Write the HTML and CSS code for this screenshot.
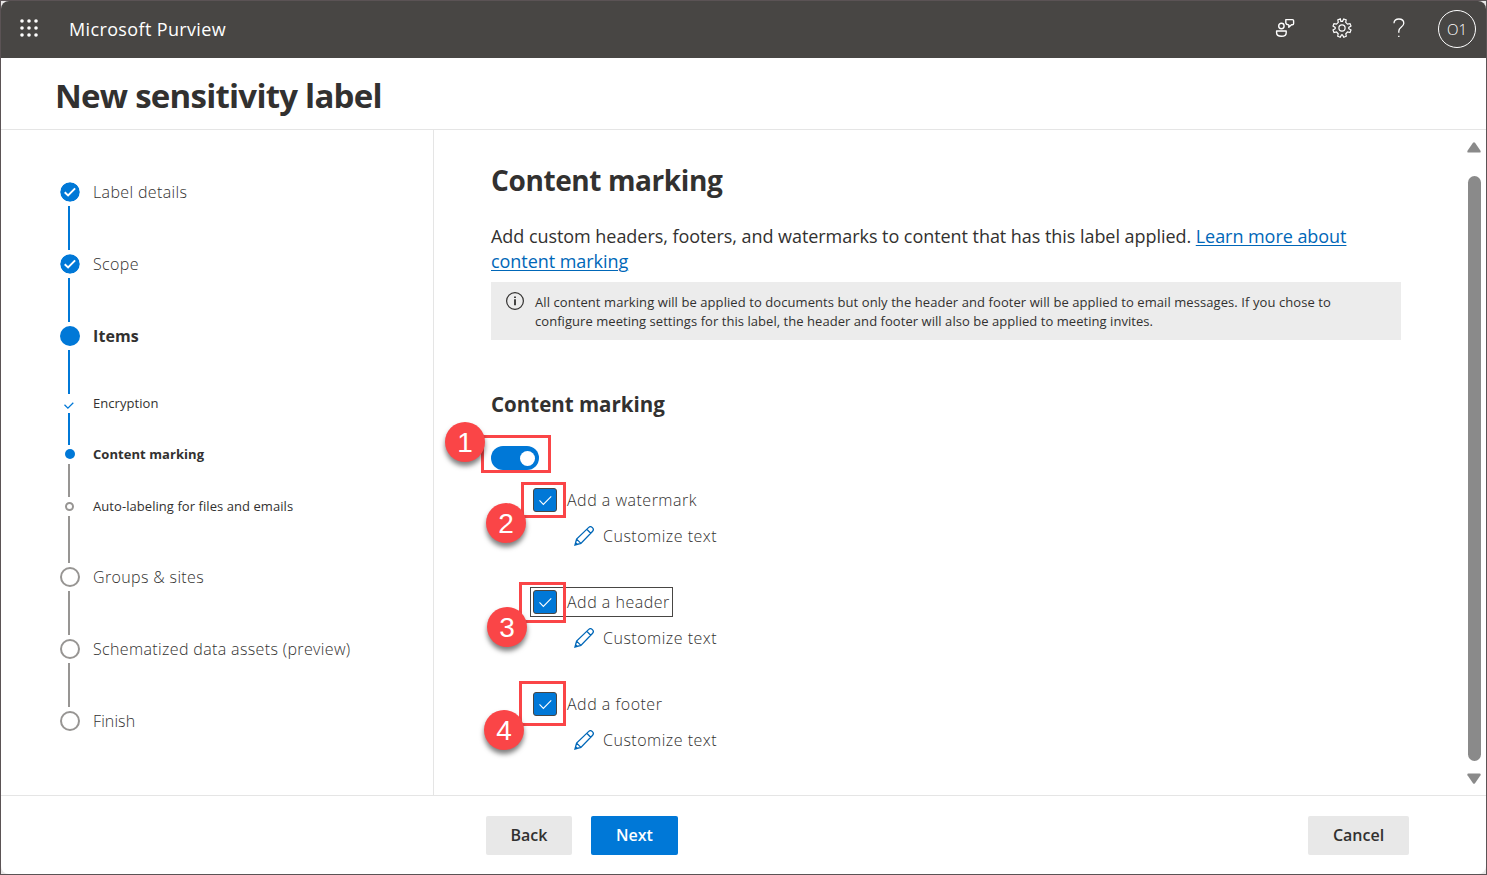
FILE: index.html
```html
<!DOCTYPE html>
<html lang="en">
<head>
<meta charset="utf-8">
<title>New sensitivity label - Microsoft Purview</title>
<link rel="stylesheet" href="styles.css">
</head>
<body>
<svg class="defs" width="0" height="0" aria-hidden="true">
  <symbol id="pencil" viewBox="0 0 20 20">
    <path d="M1 19l1.600-5.900L14.500 1.600a2.400 2.400 0 0 1 3.900 3.900L6.900 17.400zM2.600 13.100l4.300 4.300M12.800 3.300l3.900 3.900M1 19l.6-2.300 1.700 1.700z" fill="none" stroke="currentColor" stroke-width="1.300"/>
  </symbol>
  <symbol id="tick" viewBox="0 0 24 24">
    <path d="M6 12.500l4.200 4.300L18.800 8" fill="none" stroke="currentColor" stroke-width="1.200"/>
  </symbol>
  <symbol id="done" viewBox="0 0 20 20">
    <circle cx="10" cy="10" r="9.800" fill="#0078d7"/>
    <path d="M4.700 10.200l3.400 3.200 7-7" fill="none" stroke="#fff" stroke-width="2"/>
  </symbol>
</svg>
<div class="window">
  <header class="topbar">
    <svg class="waffle" width="20" height="20" viewBox="0 0 20 20" fill="#fff">
      <circle cx="3" cy="3" r="1.800"/><circle cx="10" cy="3" r="1.800"/><circle cx="17" cy="3" r="1.800"/>
      <circle cx="3" cy="10" r="1.800"/><circle cx="10" cy="10" r="1.800"/><circle cx="17" cy="10" r="1.800"/>
      <circle cx="3" cy="17" r="1.800"/><circle cx="10" cy="17" r="1.800"/><circle cx="17" cy="17" r="1.800"/>
    </svg>
    <span class="product">Microsoft Purview</span>
    <svg class="feedback" width="20" height="20" viewBox="0 0 20 20" fill="none" stroke="#fff" stroke-width="1.400">
      <circle cx="6.400" cy="8" r="2.700"/>
      <path d="M1.600 13h9.600v1.700c0 2.200-1.800 3.600-4.800 3.600s-4.800-1.400-4.800-3.600z" stroke-linejoin="round"/>
      <path d="M10.800 1.600h6.600q1.200 0 1.200 1.200v2.800q0 1.200-1.200 1.200h-.9l-2.700 2.500V6.900q-2.600-.2-3-1.800z" stroke-linejoin="round"/>
    </svg>
    <svg class="gear" width="20" height="20" viewBox="0 0 20 20" fill="none" stroke="#fff" stroke-width="1.200">
      <circle cx="10" cy="10" r="3.100"/>
      <path d="M8.900 3.300L8.300.9l-2.500 1 .5 2.400-1.800 1.800-2.500-.5-1 2.500 2.200 1.300v1.300L1 12l1 2.500 2.500-.5 1.700 1.800-.5 2.400 2.500 1L9.500 16.900h1l1.300 2.300 2.500-1-.5-2.400 1.700-1.800 2.500.5 1-2.500-2.200-1.300V9.400L19 8.100l-1-2.500-2.500.5-1.800-1.800.5-2.400-2.500-1-1.200 2.400z"/>
    </svg>
    <svg class="help" width="12" height="20" viewBox="0 0 12 20" fill="none" stroke="#fff" stroke-width="1.300">
      <path d="M1 5.300C1 2.500 3 1 5.800 1s5 1.600 5 4.200c0 3.800-5 4-5 8v1.500"/><path d="M5.100 18.300h1.400"/>
    </svg>
    <span class="avatar">O1</span>
  </header>

  <div class="titlebar"><h1 class="title">New sensitivity label</h1></div>

  <div class="body">
    <nav class="steps">
      <div class="step"><div class="rail"><svg class="dot"><use href="#done"/></svg><i class="line"></i></div><span class="name">Label details</span></div>
      <div class="step"><div class="rail"><svg class="dot"><use href="#done"/></svg><i class="line"></i></div><span class="name">Scope</span></div>
      <div class="step"><div class="rail"><i class="dot current"></i><i class="line"></i></div><span class="name strong">Items</span></div>
      <div class="step sub first"><div class="rail"><svg class="mini-tick" width="10" height="7" viewBox="0 0 10 7"><path d="M.5 2.800l3.400 3.300L9.300.8" fill="none" stroke="#0078d7" stroke-width="1.300"/></svg><i class="line"></i></div><span class="name">Encryption</span></div>
      <div class="step sub second"><div class="rail"><i class="mini current"></i><i class="line idle"></i></div><span class="name strong">Content marking</span></div>
      <div class="step sub third"><div class="rail"><i class="mini todo"></i><i class="line idle"></i></div><span class="name">Auto-labeling for files and emails</span></div>
      <div class="step"><div class="rail"><i class="dot todo"></i><i class="line idle"></i></div><span class="name">Groups &amp; sites</span></div>
      <div class="step"><div class="rail"><i class="dot todo"></i><i class="line idle"></i></div><span class="name">Schematized data assets (preview)</span></div>
      <div class="step"><div class="rail"><i class="dot todo"></i></div><span class="name finish">Finish</span></div>
    </nav>

    <main class="content">
      <h2 class="heading">Content marking</h2>
      <p class="intro">Add custom headers, footers, and watermarks to content that has this label applied. <a class="link" href="#">Learn more about<br>content marking</a></p>
      <div class="notice">
        <svg class="info" width="18" height="18" viewBox="0 0 18 18"><circle cx="9" cy="9" r="8.400" fill="none" stroke="#323130" stroke-width="1.200"/><path d="M9 7.300v6M9 4.500v1.600" stroke="#323130" stroke-width="1.800"/></svg>
        <p class="notice-text">All content marking will be applied to documents but only the header and footer will be applied to email messages. If you chose to<br><span class="second-line">configure meeting settings for this label, the header and footer will also be applied to meeting invites.</span></p>
      </div>
      <h3 class="subheading">Content marking</h3>
      <div class="toggle-row"><span class="toggle"><i class="knob"></i></span><i class="frame f1"></i><b class="badge b1">1</b></div>
      <div class="option">
        <div class="check"><svg class="box"><use href="#tick"/></svg><span class="label">Add a watermark</span></div>
        <div class="customize"><svg class="pen"><use href="#pencil"/></svg><span class="custom-label">Customize text</span></div>
        <i class="frame f2"></i><b class="badge b2">2</b>
      </div>
      <div class="option">
        <div class="check focused"><svg class="box"><use href="#tick"/></svg><span class="label">Add a header</span></div>
        <div class="customize"><svg class="pen"><use href="#pencil"/></svg><span class="custom-label">Customize text</span></div>
        <i class="frame f3"></i><b class="badge b3">3</b>
      </div>
      <div class="option">
        <div class="check"><svg class="box"><use href="#tick"/></svg><span class="label">Add a footer</span></div>
        <div class="customize"><svg class="pen"><use href="#pencil"/></svg><span class="custom-label">Customize text</span></div>
        <i class="frame f4"></i><b class="badge b4">4</b>
      </div>
    </main>

    <div class="scrollbar">
      <svg class="arrow" width="14" height="11" viewBox="0 0 14 11"><path d="M6 .8q1-1 2 0l5.500 8q.6 1.700-.9 1.700H1.400Q-.1 10.500.5 8.800z" fill="#8a8a8a"/></svg>
      <i class="thumb"></i>
      <svg class="arrow" width="14" height="11" viewBox="0 0 14 11"><path d="M6 10.200q1 1 2 0l5.500-8q.6-1.700-.9-1.700H1.400Q-.1.500.5 2.200z" fill="#8a8a8a"/></svg>
    </div>
  </div>

  <footer class="actions">
    <button class="btn back">Back</button>
    <button class="btn next">Next</button>
    <button class="btn cancel">Cancel</button>
  </footer>
</div>
</body>
</html>
```

FILE: styles.css
```css
* { box-sizing: border-box; }
body { margin: 0; background: #e9e8e8; font-family: "Open Sans", "Noto Sans", sans-serif; color: #323130; }
h1, h2, h3, p { margin: 0; }
svg, i { display: block; }
.defs { position: absolute; }

.window { width: 1487px; height: 875px; border: 1px solid #5b5355; display: flex; flex-direction: column; background: #e9e8e8; overflow: hidden; }

.topbar { height: 57px; flex: none; display: flex; align-items: center; background: #484644; border-radius: 8px 8px 0 0; padding: 0 10px 2px 18px; color: #fff; }
.topbar svg { margin-top: -1px; }
.product { margin-left: 30px; font-size: 18px; line-height: 24px; letter-spacing: .36px; white-space: nowrap; padding-top: 1px; }
.feedback { margin-left: auto; }
.gear { margin-left: 37px; }
.help { margin-left: 41px; }
.avatar { margin-left: 33px; width: 38px; height: 38px; border: 1px solid #fff; border-radius: 50%; font-size: 15px; line-height: 37px; text-align: center; font-weight: 350; }

.titlebar { height: 72px; flex: none; background: #fff; border-bottom: 1px solid #e5e5e5; padding: 15px 0 0 54px; }
.title { font-size: 33px; line-height: 46px; font-weight: 700; letter-spacing: -.75px; white-space: nowrap; }

.body { height: 665px; flex: none; display: flex; background: #fff; }
.steps { width: 433px; flex: none; border-right: 1px solid #e5e5e5; padding: 52px 0 0 59px; }
.step { display: flex; height: 72px; font-size: 16px; line-height: 20px; font-weight: 350; white-space: nowrap; }
.rail { width: 19px; display: flex; flex-direction: column; align-items: center; margin-right: 14px; }
.name { letter-spacing: .36px; }
.dot { width: 20px; height: 20px; flex: none; border-radius: 50%; }
.line { width: 2px; height: 44px; margin: 4px 1px 0 0; flex: none; background: #0078d7; }
.idle { background: #979593; }
.current { background: #0078d7; }
.todo { border: 2px solid #979593; }
.strong { font-weight: 700; letter-spacing: .1px; }
.finish { letter-spacing: .1px; }
.sub { font-size: 13px; font-weight: 400; }
.sub .name { letter-spacing: .06px; margin-top: -1px; }
.first { height: 47px; }
.first .name { margin-top: -5px; }
.first .line { height: 32px; }
.mini-tick { margin: 4px 1px 0 0; flex: none; }
.second { height: 52px; }
.mini { width: 10px; height: 10px; flex: none; border-radius: 50%; margin-top: 4px; }
.mini.current { margin-left: 1px; }
.mini.todo { width: 9px; height: 9px; margin-top: 5px; }
.second .line { height: 33px; margin-top: 5px; }
.third { height: 70px; }
.third .line { height: 47px; margin-top: 5px; }

.content { width: 1025px; flex: none; padding: 30px 0 0 57px; }
.heading { font-size: 28px; line-height: 41px; font-weight: 700; letter-spacing: -.4px; white-space: nowrap; }
.intro { margin-top: 23px; font-size: 18px; line-height: 25px; letter-spacing: -.05px; white-space: nowrap; }
.link { color: #0067b8; text-underline-offset: 2px; text-decoration-thickness: 1px; }
.notice { margin-top: 8px; width: 910px; height: 58px; background: #ececec; display: flex; padding: 10px 15px; }
.notice-text { margin-left: 11px; margin-top: 1px; font-size: 13px; line-height: 19px; letter-spacing: .077px; white-space: nowrap; }
.second-line { letter-spacing: .05px; }
.subheading { margin-top: 49px; font-size: 20.5px; line-height: 30px; white-space: nowrap; }
.toggle-row { position: relative; height: 69px; padding-top: 27px; }
.toggle { display: flex; justify-content: flex-end; align-items: center; width: 48px; height: 24px; border-radius: 12px; padding: 4px; background: #0078d7; }
.knob { width: 15px; height: 15px; background: #fff; border-radius: 50%; }

.option { display: flow-root; position: relative; height: 102px; padding-left: 39px; }
.check { display: flex; align-items: center; width: 143px; height: 30px; padding-left: 3px; white-space: nowrap; margin-top: -3px; }
.focused { outline: 1px solid #484644; outline-offset: -1px; }
.box { width: 24px; height: 24px; flex: none; border: 1px solid #484644; border-radius: 3px; background: #0078d7; color: #fff; }
.label { margin-left: 10px; font-size: 16px; line-height: 22px; font-weight: 350; letter-spacing: .5px; }
.customize { display: flex; align-items: center; height: 24px; margin: 9px 0 0 44px; font-size: 16px; font-weight: 350; line-height: 22px; letter-spacing: .5px; white-space: nowrap; }
.pen { width: 20px; height: 20px; color: #0067b8; }
.custom-label { margin-left: 9px; }

/* step callouts drawn over the form */
.frame { position: absolute; border: 3px solid #fa4547; }
.badge { position: absolute; width: 40px; height: 40px; border-radius: 50%; background: #fa4547; color: #fff; font: 400 28px/41px "Liberation Sans", sans-serif; text-align: center; box-shadow: 0 4px 5px rgba(0,0,0,.5); }
.f1 { left: -10px; top: 16px; width: 70px; height: 38px; }
.b1 { left: -46px; top: 3px; }
.f2 { left: 30px; top: -6px; width: 45px; height: 36px; }
.b2 { left: -5px; top: 15px; }
.f3 { left: 28px; top: -8px; width: 47px; height: 41px; }
.b3 { left: -4px; top: 17px; }
.f4 { left: 28px; top: -11px; width: 47px; height: 45px; }
.b4 { left: -7px; top: 18px; }

.scrollbar { width: 27px; flex: none; padding: 12px 5px 0 9px; }
.arrow { margin-left: -1px; }
.thumb { width: 13px; height: 585px; margin: 23px 0 12px; border-radius: 7px; background: #8a8a8a; }

.actions { flex: 1; background: #fff; border-radius: 0 0 8px 8px; border-top: 1px solid #e5e5e5; display: flex; align-items: flex-start; padding: 20px 77px 0 485px; }
.btn { height: 39px; border: 0; border-radius: 2px; padding: 0 0 1px; font: 600 16px/22px "Open Sans", sans-serif; color: #323130; background: #e8e8e8; }
.back { width: 86px; }
.next { width: 87px; margin-left: 19px; background: #0078d7; color: #fff; }
.cancel { width: 101px; margin-left: auto; }
```
